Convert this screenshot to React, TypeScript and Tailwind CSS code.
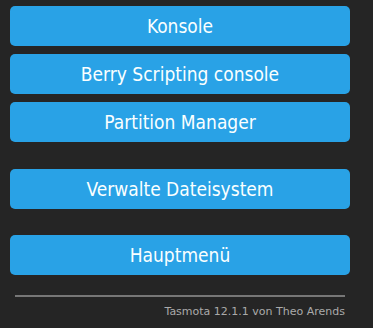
const BUTTONS = [
  { label: "Konsole", gap: "mt-[6px]" },
  { label: "Berry Scripting console", gap: "mt-2" },
  { label: "Partition Manager", gap: "mt-2" },
  { label: "Verwalte Dateisystem", gap: "mt-[27px]" },
  { label: "Hauptmenü", gap: "mt-[26px]" },
];

export default function App() {
  return (
    <div className="min-h-screen w-full bg-[#252525] font-['DejaVu_Sans',Tahoma,sans-serif]">
      <div className="w-[340px] ml-[10px] flex flex-col">
        {BUTTONS.map((b) => (
          <button
            key={b.label}
            className={`${b.gap} h-10 w-full rounded-[5px] bg-[#29a2e6] text-[#faffff] text-[19px] leading-10 font-['DejaVu_Sans_Condensed','DejaVu_Sans',sans-serif]`}
          >
            {b.label}
          </button>
        ))}

        {/* footer */}
        <div className="mt-5 px-[5px] text-right text-[11px] text-[#aaa]">
          <hr className="border-0 border-t-2 border-[#777]" />
          <div className="mt-[7px]">Tasmota 12.1.1 von Theo Arends</div>
        </div>
      </div>
    </div>
  );
}
